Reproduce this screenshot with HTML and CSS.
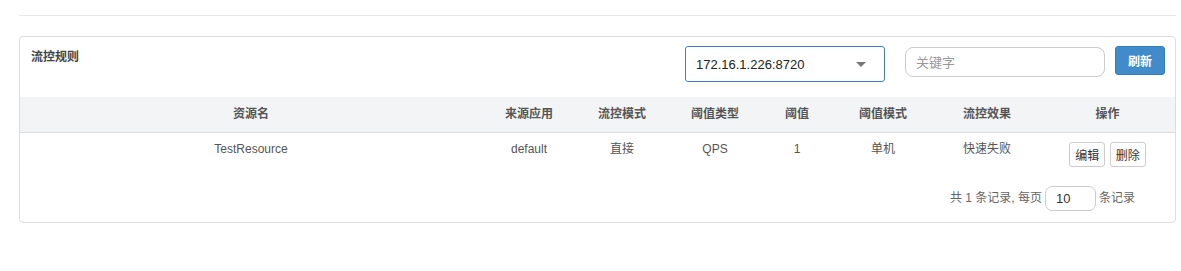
FILE: index.html
```html
<!DOCTYPE html>
<html lang="zh-CN">
<head>
    <meta charset="UTF-8">
    <meta name="viewport" content="width=device-width, initial-scale=1.0">
    <title>流控规则</title>
    <link rel="stylesheet" href="styles.css">
</head>
<body>
    <div class="page">
        <hr class="divider">

        <div class="panel">
            <div class="panel-head">
                <div class="panel-title">流控规则</div>
                <div class="toolbar">
                    <div class="machine-select">
                        <span>172.16.1.226:8720</span>
                        <span class="caret"></span>
                    </div>
                    <input type="text" class="search-input" placeholder="关键字">
                    <button class="btn-primary">刷新</button>
                </div>
            </div>

            <table class="rules-table">
                <colgroup>
                    <col style="width: 462px">
                    <col style="width: 94px">
                    <col style="width: 92px">
                    <col style="width: 94px">
                    <col style="width: 70px">
                    <col style="width: 102px">
                    <col style="width: 106px">
                    <col>
                </colgroup>
                <thead>
                    <tr>
                        <th>资源名</th>
                        <th>来源应用</th>
                        <th>流控模式</th>
                        <th>阈值类型</th>
                        <th>阈值</th>
                        <th>阈值模式</th>
                        <th>流控效果</th>
                        <th>操作</th>
                    </tr>
                </thead>
                <tbody>
                    <tr>
                        <td>TestResource</td>
                        <td>default</td>
                        <td>直接</td>
                        <td>QPS</td>
                        <td>1</td>
                        <td>单机</td>
                        <td>快速失败</td>
                        <td class="actions">
                            <button class="btn-small">编辑</button>
                            <button class="btn-small">删除</button>
                        </td>
                    </tr>
                </tbody>
            </table>

            <div class="pager">
                <span>共 1 条记录, 每页</span>
                <input type="text" class="page-size" value="10">
                <span>条记录</span>
            </div>
        </div>
    </div>
</body>
</html>
```

FILE: styles.css
```css
* {
    margin: 0;
    padding: 0;
    box-sizing: border-box;
}

body {
    font-family: "Liberation Sans", "Noto Sans CJK SC", sans-serif;
    font-size: 12px;
    line-height: 17px;
    color: #333;
    background: #fff;
}

.page {
    padding: 15px 5px 0 19px;
}

.divider {
    border: none;
    border-top: 1px solid #e6e6e6;
    margin: 0 0 20px 0;
}

.panel {
    width: 1157px;
    height: 187px;
    border: 1px solid #ddd;
    border-radius: 4px;
}

.panel-head {
    display: flex;
    justify-content: space-between;
    height: 60px;
    padding: 9px 10px 0 11px;
}

.panel-title {
    font-weight: bold;
    font-size: 12px;
    color: #444;
    margin-top: 3px;
}

.toolbar {
    display: flex;
    align-items: flex-start;
}

.machine-select {
    width: 200px;
    height: 36px;
    border: 1px solid #3d7fc1;
    border-radius: 3px;
    display: flex;
    align-items: center;
    justify-content: space-between;
    padding: 0 18px 0 10px;
    font-size: 13px;
    color: #222;
}

.caret {
    width: 0;
    height: 0;
    border-left: 5px solid transparent;
    border-right: 5px solid transparent;
    border-top: 5px solid #777;
}

.search-input {
    width: 200px;
    height: 30px;
    margin: 1px 0 0 20px;
    border: 1px solid #ccc;
    border-radius: 8px;
    padding: 0 10px;
    font-family: inherit;
    font-size: 13px;
    outline: none;
}

.search-input::placeholder {
    color: #999;
}

.btn-primary {
    width: 50px;
    height: 29px;
    margin-left: 10px;
    background: #428bca;
    border: 1px solid #357ebd;
    border-radius: 3px;
    color: #fff;
    font-family: inherit;
    font-size: 12px;
    font-weight: bold;
}

.rules-table {
    width: 100%;
    border-collapse: collapse;
    table-layout: fixed;
}

.rules-table th {
    background: #f3f4f6;
    height: 35px;
    font-weight: bold;
    color: #555;
    border-bottom: 1px solid #ddd;
    text-align: center;
}

.rules-table td {
    text-align: center;
    color: #555;
    vertical-align: top;
    padding-top: 8px;
    height: 40px;
}

.rules-table td.actions {
    padding-top: 9px;
}

.btn-small {
    height: 25px;
    padding: 0 5px;
    background: #fff;
    border: 1px solid #ccc;
    border-radius: 3px;
    font-family: inherit;
    font-size: 12px;
    color: #333;
}

.actions .btn-small + .btn-small {
    margin-left: 1px;
}

.pager {
    display: flex;
    justify-content: flex-end;
    align-items: center;
    padding: 14px 40px 0 0;
    color: #666;
    font-size: 12px;
}

.page-size {
    width: 51px;
    height: 25px;
    margin: 0 3px;
    border: 1px solid #ccc;
    border-radius: 7px;
    padding: 0 10px;
    font-family: inherit;
    font-size: 13px;
    color: #333;
    outline: none;
}
```
